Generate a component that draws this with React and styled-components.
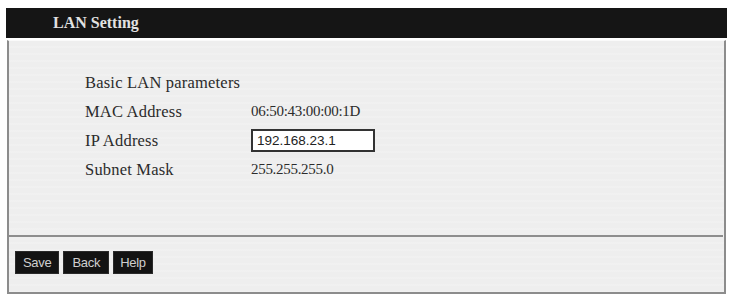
import React from 'react';
import styled, { createGlobalStyle } from 'styled-components';

const GlobalStyle = createGlobalStyle`
  body {
    margin: 0;
    background: #ffffff;
    font-family: "Liberation Serif", "Times New Roman", serif;
  }
`;

const Frame = styled.div`
  width: 721px;
  margin: 8px 0 0 6px;
`;

const TitleBar = styled.div`
  height: 30px;
  background: #151515;
  color: #e2e2e2;
  font-weight: bold;
  font-size: 16px;
  line-height: 30px;
  padding-left: 47px;
`;

const Panel = styled.div`
  margin: 2px 1px 0 1px;
  border: 2px solid #8c8c8c;
  border-top: 0;
  background: #eeeeee repeating-linear-gradient(
    to bottom,
    #eeeeee 0px,
    #eeeeee 5px,
    #f3f3f3 6px,
    #eeeeee 7px
  );
  border-top: 1px solid #fafafa;
`;

const Content = styled.div`
  height: 194px;
  padding: 27px 0 0 76px;
  box-sizing: border-box;
`;

const Row = styled.div`
  display: grid;
  grid-template-columns: 166px 1fr;
  align-items: center;
  height: 29px;
  color: #2b2b2b;
`;

const Label = styled.span`
  font-size: 16.5px;
  letter-spacing: 0.2px;
`;

const Value = styled.span`
  font-size: 15px;
  letter-spacing: -0.3px;
`;

const TextInput = styled.input`
  width: 124px;
  height: 23px;
  box-sizing: border-box;
  border: 2px solid #333333;
  background: #ffffff;
  padding: 0 0 0 4px;
  font-family: "Liberation Sans", Arial, sans-serif;
  font-size: 13.5px;
  color: #222222;
  outline: none;
`;

const Divider = styled.div`
  height: 2px;
  background: #8c8c8c;
  margin-right: 1px;
`;

const Footer = styled.div`
  display: flex;
  gap: 4px;
  height: 55px;
  padding: 14px 0 0 6px;
  box-sizing: border-box;
`;

const ActionButton = styled.button`
  height: 23px;
  padding: 0 ${p => p.$pad}px;
  border: 1px solid #2a2a2a;
  background: #131313;
  color: #cfcfcf;
  font-family: "Liberation Sans", Arial, sans-serif;
  font-size: 13px;
  letter-spacing: -0.3px;
  cursor: pointer;
`;

const rows = [
  { label: 'MAC Address', value: '06:50:43:00:00:1D' },
  { label: 'IP Address', input: '192.168.23.1' },
  { label: 'Subnet Mask', value: '255.255.255.0' },
];

const App = () => (
  <>
    <GlobalStyle />
    <Frame>
      <TitleBar>LAN Setting</TitleBar>
      <Panel>
        <Content>
          <Row>
            <Label>Basic LAN parameters</Label>
          </Row>
          {rows.map(row => (
            <Row key={row.label}>
              <Label>{row.label}</Label>
              {row.input ? (
                <div>
                  <TextInput defaultValue={row.input} />
                </div>
              ) : (
                <Value>{row.value}</Value>
              )}
            </Row>
          ))}
        </Content>
        <Divider />
        <Footer>
          <ActionButton $pad={7}>Save</ActionButton>
          <ActionButton $pad={8}>Back</ActionButton>
          <ActionButton $pad={6}>Help</ActionButton>
        </Footer>
      </Panel>
    </Frame>
  </>
);

export default App;
